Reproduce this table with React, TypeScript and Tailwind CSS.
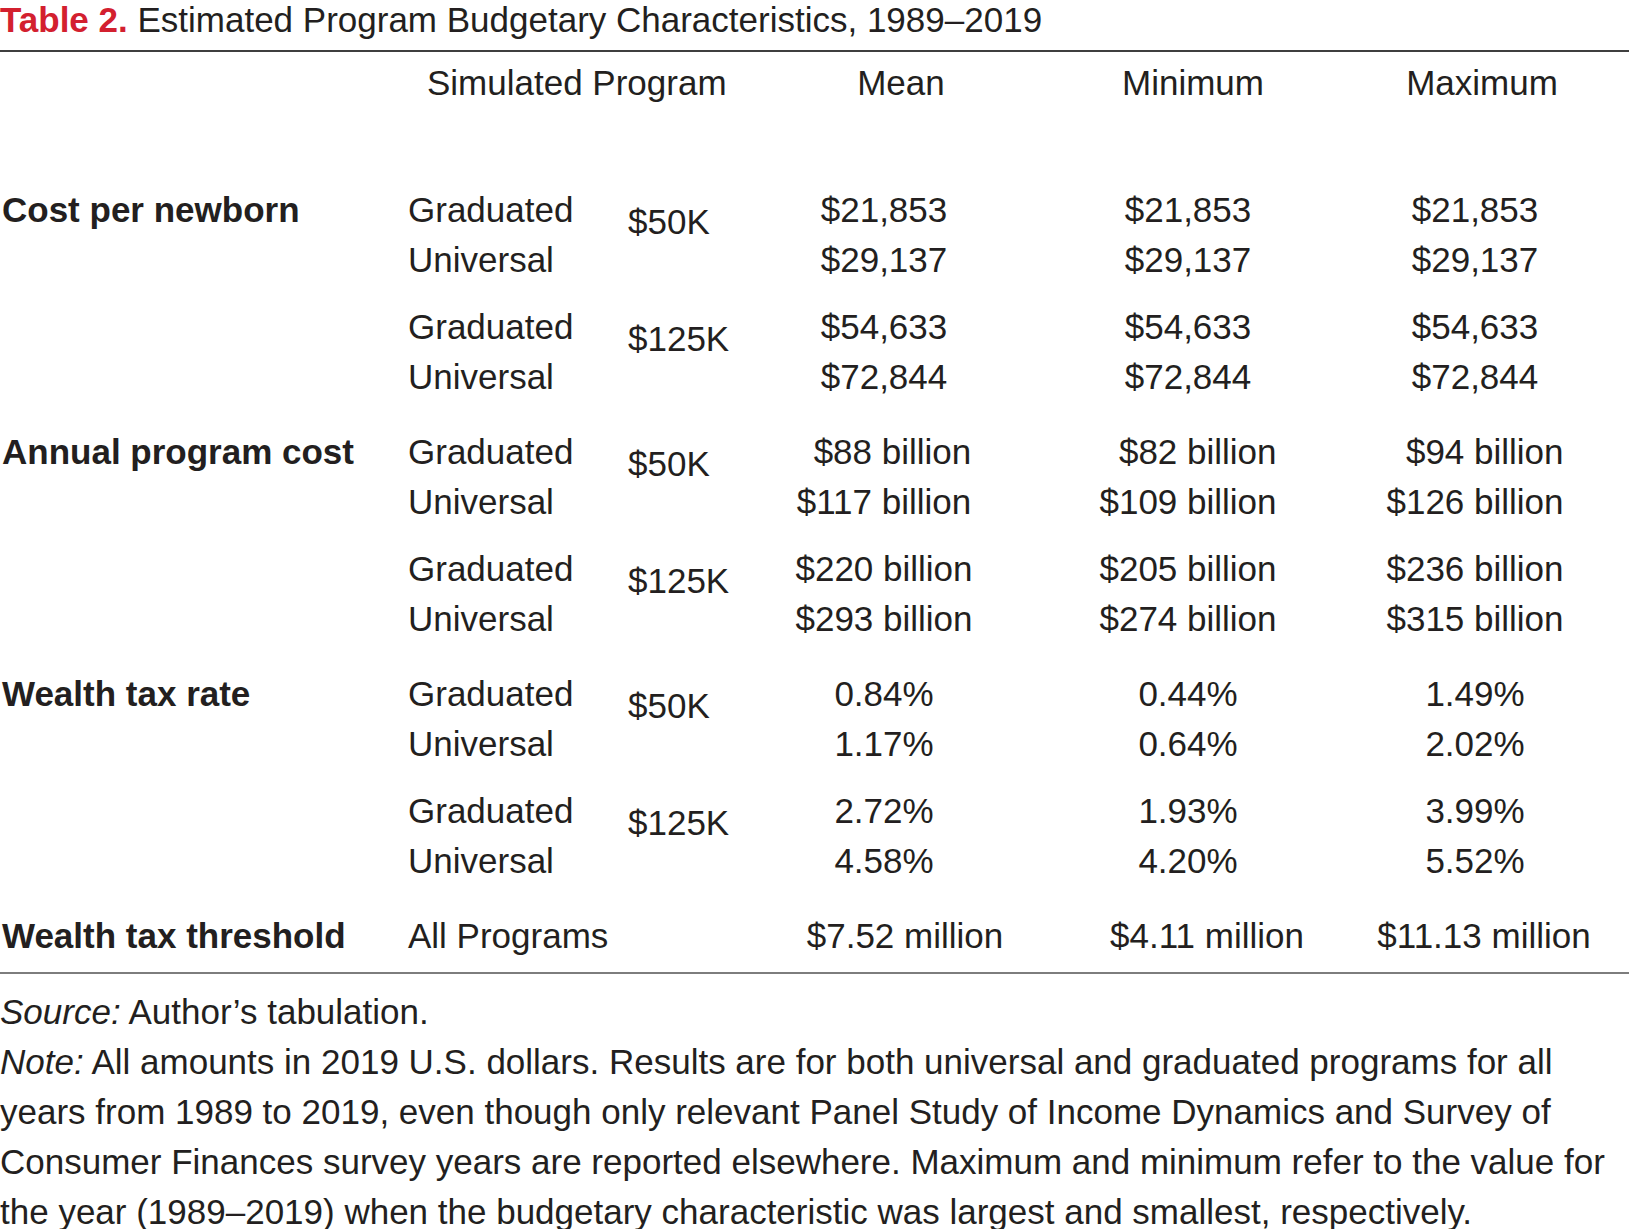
import React from "react";

type Group = {
  amount: string;
  mean: string[];
  min: string[];
  max: string[];
};

type Section = {
  label: string;
  groups: Group[];
};

const sections: Section[] = [
  {
    label: "Cost per newborn",
    groups: [
      { amount: "$50K", mean: ["$21,853", "$29,137"], min: ["$21,853", "$29,137"], max: ["$21,853", "$29,137"] },
      { amount: "$125K", mean: ["$54,633", "$72,844"], min: ["$54,633", "$72,844"], max: ["$54,633", "$72,844"] },
    ],
  },
  {
    label: "Annual program cost",
    groups: [
      { amount: "$50K", mean: ["$88 billion", "$117 billion"], min: ["$82 billion", "$109 billion"], max: ["$94 billion", "$126 billion"] },
      { amount: "$125K", mean: ["$220 billion", "$293 billion"], min: ["$205 billion", "$274 billion"], max: ["$236 billion", "$315 billion"] },
    ],
  },
  {
    label: "Wealth tax rate",
    groups: [
      { amount: "$50K", mean: ["0.84%", "1.17%"], min: ["0.44%", "0.64%"], max: ["1.49%", "2.02%"] },
      { amount: "$125K", mean: ["2.72%", "4.58%"], min: ["1.93%", "4.20%"], max: ["3.99%", "5.52%"] },
    ],
  },
];

// columns: label | program + amount | mean | minimum | maximum
const cols = "grid grid-cols-[408px_333px_286px_322px_252px]";

function Values({ vals }: { vals: string[] }) {
  return (
    <div className="flex justify-center">
      <div className="text-right">
        {vals.map((v) => (
          <div key={v}>{v}</div>
        ))}
      </div>
    </div>
  );
}

export default function App() {
  return (
    <div className="w-[1629px] bg-white font-['Liberation_Sans',Arial,sans-serif] text-[#231f20]">
      <h1 className="text-[35px] leading-[39px] whitespace-nowrap">
        <span className="font-bold text-[#d3202f]">Table 2.</span> Estimated Program Budgetary Characteristics, 1989–2019
      </h1>

      <div className="mt-[11px] border-t-2 border-[#3f3f3f]" />

      <div className="text-[35px] leading-[50px]">
        {/* header */}
        <div className={`${cols} pt-[6px]`}>
          <div />
          <div className="pl-[19px]">Simulated Program</div>
          <div className="pl-[34px] text-center">Mean</div>
          <div className="pl-[10px] text-center">Minimum</div>
          <div className="pl-[14px] text-center">Maximum</div>
        </div>

        <div className="mt-[77px] flex flex-col gap-[25px]">
          {sections.map((s) => (
            <div key={s.label} className="flex flex-col gap-[17px]">
              {s.groups.map((g, i) => (
                <div key={g.amount} className={cols}>
                  <div className="pl-[2px] font-bold whitespace-nowrap">{i === 0 ? s.label : ""}</div>
                  <div className="flex">
                    <div className="w-[220px]">
                      <div>Graduated</div>
                      <div>Universal</div>
                    </div>
                    <div className="pt-[12px]">{g.amount}</div>
                  </div>
                  <Values vals={g.mean} />
                  <Values vals={g.min} />
                  <Values vals={g.max} />
                </div>
              ))}
            </div>
          ))}

          <div className={cols}>
            <div className="pl-[2px] font-bold whitespace-nowrap">Wealth tax threshold</div>
            <div>All Programs</div>
            <div className="pl-[42px] text-center whitespace-nowrap">$7.52 million</div>
            <div className="pl-[38px] text-center whitespace-nowrap">$4.11 million</div>
            <div className="pl-[18px] text-center whitespace-nowrap">$11.13 million</div>
          </div>
        </div>

        <div className="mt-[11px] border-t-2 border-[#7d7d7d]" />

        <div className="mt-[13px] whitespace-nowrap">
          <div>
            <span className="italic">Source:</span> Author’s tabulation.
          </div>
          <div>
            <span className="italic">Note:</span> All amounts in 2019 U.S. dollars. Results are for both universal and graduated programs for all
          </div>
          <div>years from 1989 to 2019, even though only relevant Panel Study of Income Dynamics and Survey of</div>
          <div>Consumer Finances survey years are reported elsewhere. Maximum and minimum refer to the value for</div>
          <div>the year (1989–2019) when the budgetary characteristic was largest and smallest, respectively.</div>
        </div>
      </div>
    </div>
  );
}
